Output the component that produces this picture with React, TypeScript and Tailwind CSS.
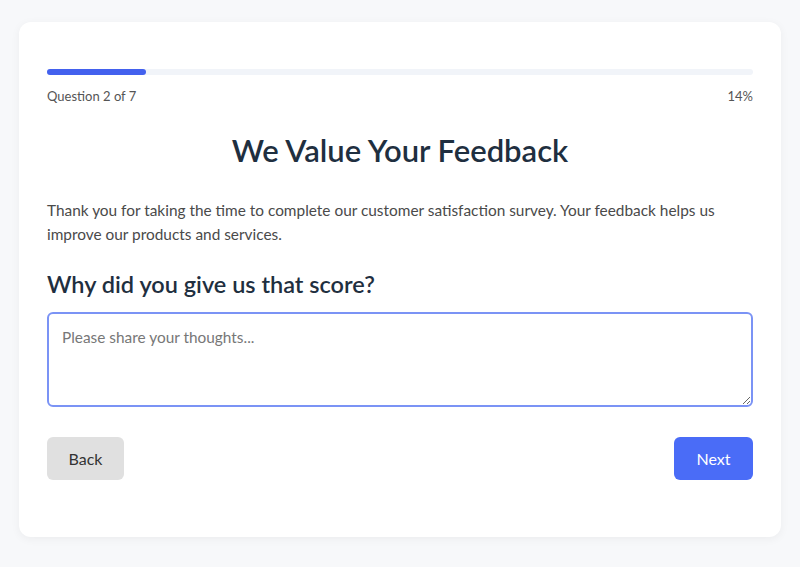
import React, { useState } from 'react';

export default function App() {
  const [answer, setAnswer] = useState('');
  const current = 2;
  const total = 7;
  const percent = 14;

  return (
    <div
      className="min-h-screen bg-[#f7f8fa] px-[19px] pt-[22px] pb-[30px]"
      style={{ fontFamily: 'Lato, "Noto Sans", sans-serif' }}
    >
      <div className="bg-white rounded-xl shadow-[0_2px_10px_rgba(0,0,0,0.05)] px-[28px] pt-[47px] pb-[57px]">
        {/* Progress */}
        <div className="h-[6px] w-full rounded-full bg-[#f1f4f9]">
          <div className="h-full rounded-full bg-[#4361ee]" style={{ width: `${percent}%` }} />
        </div>
        <div className="mt-[12px] flex justify-between text-[13px] leading-[18px] text-[#555]">
          <span>
            Question {current} of {total}
          </span>
          <span>{percent}%</span>
        </div>

        <h1 className="mt-[26px] text-center text-[31px] leading-[38px] font-semibold text-[#1f2f40]">
          We Value Your Feedback
        </h1>

        <p className="mt-[29px] text-[15.4px] leading-[24px] text-[#4a4a4a]">
          Thank you for taking the time to complete our customer satisfaction survey. Your feedback helps us
          improve our products and services.
        </p>

        <h2 className="mt-[23px] text-[23.5px] leading-[30px] font-semibold text-[#1f2f40]">
          Why did you give us that score?
        </h2>

        <textarea
          value={answer}
          onChange={(e) => setAnswer(e.target.value)}
          placeholder="Please share your thoughts..."
          className="mt-[13px] block h-[95px] w-full rounded-md border-2 border-[#7b93f5] px-[13px] py-[12px] text-[15.4px] leading-[22px] text-[#333] placeholder:text-[#777] outline-none"
        />

        <div className="mt-[30px] flex justify-between">
          <button className="h-[43px] w-[77px] rounded-md bg-[#e0e0e0] text-[16px] text-[#333]">Back</button>
          <button className="h-[43px] w-[79px] rounded-md bg-[#4a6cf7] text-[16px] text-white">Next</button>
        </div>
      </div>
    </div>
  );
}
